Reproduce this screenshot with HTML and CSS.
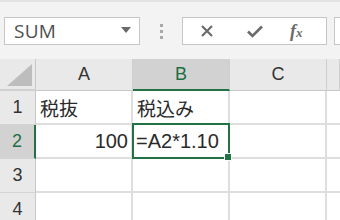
FILE: index.html
```html
<!DOCTYPE html>
<html lang="ja">
<head>
<meta charset="utf-8">
<link rel="stylesheet" href="styles.css">
</head>
<body>
<div class="app">
  <div class="formula-bar">
    <div class="namebox">
      <span class="name">SUM</span>
      <svg class="caret" width="10" height="6" viewBox="0 0 10 6"><path d="M0 0H10L5 6Z" fill="#6a6a6a"/></svg>
    </div>
    <div class="dots"><span></span><span></span><span></span></div>
    <div class="buttons">
      <svg class="btn" width="16" height="16" viewBox="0 0 16 16"><path d="M3 3L13 13M13 3L3 13" stroke="#6b6b6b" stroke-width="2.2" fill="none"/></svg>
      <svg class="btn" width="18" height="16" viewBox="0 0 18 16"><path d="M2 8.5L6.5 13L16 3.5" stroke="#6b6b6b" stroke-width="2.6" fill="none"/></svg>
      <span class="fx"><i>f</i><i class="x">x</i></span>
    </div>
    <div class="input"></div>
  </div>
  <div class="sheet">
    <div class="cell corner"><svg width="25" height="22" viewBox="0 0 25 22"><path d="M25 0V22H0Z" fill="#bdbdbd"/></svg></div>
    <div class="cell colhead">A</div>
    <div class="cell colhead sel-col">B</div>
    <div class="cell colhead">C</div>
    <div class="cell colhead rest"></div>

    <div class="cell rowhead">1</div>
    <div class="cell">税抜</div>
    <div class="cell">税込み</div>
    <div class="cell"></div>
    <div class="cell rest"></div>

    <div class="cell rowhead sel-row">2</div>
    <div class="cell num">100</div>
    <div class="cell active">=A2*1.10<span class="handle"></span></div>
    <div class="cell"></div>
    <div class="cell rest"></div>

    <div class="cell rowhead">3</div>
    <div class="cell"></div>
    <div class="cell"></div>
    <div class="cell"></div>
    <div class="cell rest"></div>

    <div class="cell rowhead">4</div>
    <div class="cell"></div>
    <div class="cell"></div>
    <div class="cell"></div>
    <div class="cell rest"></div>
  </div>
</div>
</body>
</html>
```
FILE: styles.css
```css
html, body {
  margin: 0;
  padding: 0;
}
body {
  width: 340px;
  height: 220px;
  overflow: hidden;
  background: #f3f3f3;
  font-family: "Noto Sans CJK JP", "Liberation Sans", sans-serif;
}
.app {
  border-top: 2px solid #e4e4e4;
  height: 218px;
  display: flex;
  flex-direction: column;
}
.formula-bar {
  display: flex;
  height: 41px;
  margin-top: 15px;
  padding-left: 4px;
  box-sizing: border-box;
}
.namebox {
  width: 136px;
  background: #fff;
  border: 1px solid #c6c6c6;
  box-sizing: border-box;
  display: flex;
  align-items: center;
  padding-left: 9px;
  padding-right: 8px;
}
.name {
  flex: 1;
  font-family: "Open Sans", "Liberation Sans", sans-serif;
  font-size: 19px;
  color: #505050;
  letter-spacing: 0.3px;
}
.caret {
  margin-top: -2px;
}
.dots {
  width: 42px;
  display: flex;
  flex-direction: column;
  align-items: center;
  justify-content: center;
  gap: 3px;
}
.dots span {
  width: 3px;
  height: 3px;
  background: #a8a8a8;
}
.buttons {
  width: 145px;
  background: #fff;
  border: 1px solid #c6c6c6;
  box-sizing: border-box;
  display: flex;
  align-items: center;
  padding-left: 16px;
}
.buttons svg:first-child {
  margin-right: 31px;
}
.buttons svg:nth-child(2) {
  margin-right: 26px;
}
.fx {
  font-family: "Liberation Serif", serif;
  font-size: 18px;
  font-weight: bold;
  color: #6b6b6b;
}
.fx .x {
  font-size: 13px;
}
.input {
  margin-left: 7px;
  flex: 1;
  background: #fff;
  border: 1px solid #c6c6c6;
  border-right: none;
}
.sheet {
  margin-top: 14px;
  display: grid;
  grid-template-columns: 36px 97px 97px 97px 1fr;
  grid-template-rows: 32px 34px 34px 34px 34px;
}
.cell {
  background: #fff;
  border-right: 2px solid #dedede;
  border-bottom: 2px solid #dedede;
  box-sizing: border-box;
  font-size: 19px;
  color: #2a2a2a;
  display: flex;
  align-items: center;
  padding-left: 4px;
  white-space: nowrap;
  position: relative;
}
.rest {
  border-right: none;
}
.corner, .colhead, .rowhead {
  background: #e9e9e9;
  border-color: #d0d0d0;
  color: #333;
  font-family: "Liberation Sans", sans-serif;
  font-size: 18px;
}
.corner {
  align-items: flex-end;
  justify-content: flex-end;
  padding: 0 3px 3px 0;
  border-right: 1px solid #c8c8c8;
}
.colhead {
  justify-content: center;
  padding-left: 0;
  border-right: 1px solid #cfcfcf;
  border-bottom: 1px solid #c8c8c8;
}
.rowhead {
  justify-content: center;
  padding-left: 0;
  border-right: 1px solid #c8c8c8;
  border-bottom: 1px solid #d4d4d4;
}
.sel-col {
  background: #d2d2d2;
  color: #1e6e42;
  border-bottom: 2px solid #217346;
}
.sel-row {
  background: #d2d2d2;
  color: #1e6e42;
  border-right: 2px solid #217346;
}
.num {
  justify-content: flex-end;
  padding-right: 3px;
  font-family: "Liberation Sans", sans-serif;
  font-size: 20px;
}
.active {
  font-family: "Liberation Sans", sans-serif;
  font-size: 20px;
  padding-left: 3px;
}
.active::after {
  content: "";
  position: absolute;
  left: -1px;
  top: -2px;
  right: -2px;
  bottom: -2px;
  border: 2px solid #217346;
}
.handle {
  position: absolute;
  right: -4px;
  bottom: -4px;
  width: 6px;
  height: 6px;
  background: #217346;
  border: 1px solid #fff;
  z-index: 2;
}
```
